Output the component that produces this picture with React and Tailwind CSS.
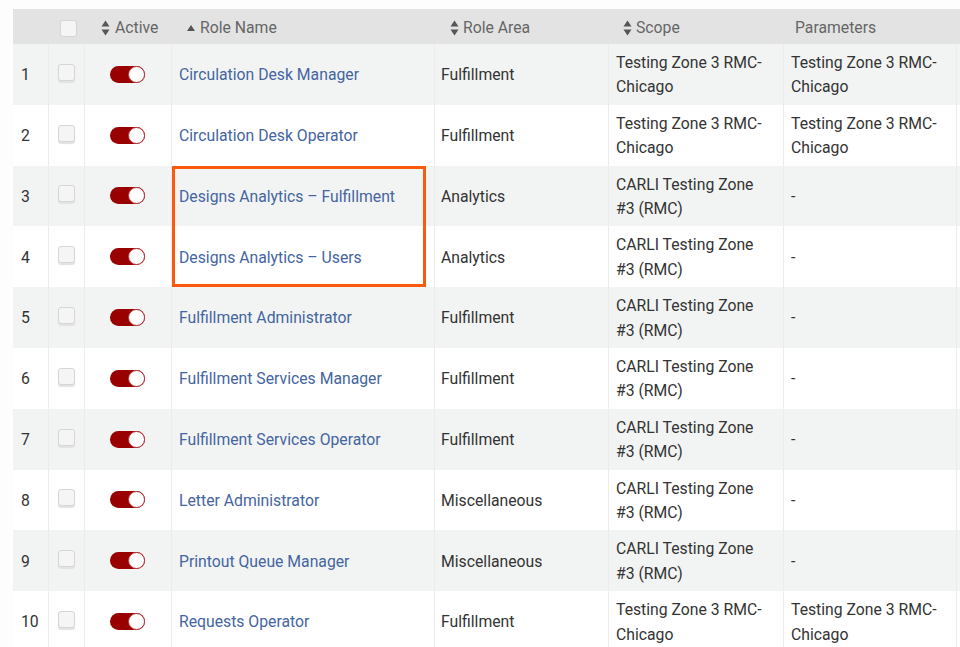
const SCOPE_A = "Testing Zone 3 RMC-Chicago";
const SCOPE_B = "CARLI Testing Zone #3 (RMC)";
const rows = [
  ["Circulation Desk Manager", "Fulfillment", SCOPE_A, SCOPE_A],
  ["Circulation Desk Operator", "Fulfillment", SCOPE_A, SCOPE_A],
  ["Designs Analytics – Fulfillment", "Analytics", SCOPE_B, "-"],
  ["Designs Analytics – Users", "Analytics", SCOPE_B, "-"],
  ["Fulfillment Administrator", "Fulfillment", SCOPE_B, "-"],
  ["Fulfillment Services Manager", "Fulfillment", SCOPE_B, "-"],
  ["Fulfillment Services Operator", "Fulfillment", SCOPE_B, "-"],
  ["Letter Administrator", "Miscellaneous", SCOPE_B, "-"],
  ["Printout Queue Manager", "Miscellaneous", SCOPE_B, "-"],
  ["Requests Operator", "Fulfillment", SCOPE_A, SCOPE_A],
];

const GRID = "grid grid-cols-[36px_36px_87px_263px_174px_175px_173px]";

function Sort() {
  return (
    <svg width="9" height="16" viewBox="0 0 9 16" className="shrink-0" fill="#555">
      <path d="M4.5 0.5 L8.5 6.5 L0.5 6.5 Z" />
      <path d="M4.5 15.5 L8.5 9.5 L0.5 9.5 Z" />
    </svg>
  );
}

function Box({ className }) {
  return (
    <span
      className={`block w-[17px] h-[17px] rounded-[3px] bg-[#f5f5f5] border border-[#d6d6d6] shadow-[0_2px_1px_#e2e2e2] ${className}`}
    />
  );
}

function Toggle() {
  return (
    <span className="relative block w-[35px] h-[17px] -translate-x-[1px] rounded-full bg-[#990000]">
      <span className="absolute right-0 top-0 w-[17px] h-[17px] rounded-full bg-white border-[1.5px] border-[#b5333a]" />
    </span>
  );
}

export default function App() {
  return (
    <div className="relative w-[960px] h-[647px] overflow-hidden bg-[#fdfdfd] pt-[9px] pl-[13px] font-['Roboto',sans-serif] text-[15.75px] leading-[24.4px] text-[#333]">
      <div className={`${GRID} h-[35px] bg-[#e3e3e3] text-[#666] items-center`}>
        <div />
        <div className="flex justify-center">
          <Box className="translate-x-[1px] translate-y-[2px]" />
        </div>
        <div className="flex items-center pl-[16px] gap-[5px] pt-[3px]">
          <Sort />
          <span>Active</span>
        </div>
        <div className="flex items-center pl-[15px] gap-[5px] pt-[3px]">
          <svg width="8" height="6" viewBox="0 0 8 6" className="shrink-0" fill="#555">
            <path d="M4 0 L8 6 L0 6 Z" />
          </svg>
          <span>Role Name</span>
        </div>
        <div className="flex items-center pl-[15px] gap-[4px] pt-[3px]">
          <Sort />
          <span>Role Area</span>
        </div>
        <div className="flex items-center pl-[14px] gap-[4px] pt-[3px]">
          <Sort />
          <span>Scope</span>
        </div>
        <div className="pl-[11px] pt-[3px]">Parameters</div>
      </div>

      {rows.map((r, i) => (
        <div
          key={r[0]}
          className={`${GRID} h-[60.8px] items-stretch ${i % 2 === 0 ? "bg-[#f2f4f4]" : "bg-white"}`}
        >
          <div className="flex items-center pl-[8px] pt-[2px] border-r border-[#ececec]">{i + 1}</div>
          <div className="flex items-center justify-center border-r border-[#ececec]">
            <Box className="-translate-y-[2px]" />
          </div>
          <div className="flex items-center justify-center border-r border-[#ececec]">
            <Toggle />
          </div>
          <div className="flex items-center pl-[7px] pt-[2px] border-r border-[#ececec] text-[#44659f]">{r[0]}</div>
          <div className="flex items-center pl-[6px] pt-[2px] border-r border-[#ececec]">{r[1]}</div>
          <div className="flex items-center pl-[7px] pr-[8px] pt-[2px] border-r border-[#ececec]">{r[2]}</div>
          <div className="flex items-center pl-[7px] pr-[8px] pt-[2px] border-r border-[#ececec]">{r[3]}</div>
        </div>
      ))}

      <div className="absolute left-[172px] top-[166px] w-[254px] h-[121px] border-[3px] border-[#fb5a0c]" />
    </div>
  );
}
